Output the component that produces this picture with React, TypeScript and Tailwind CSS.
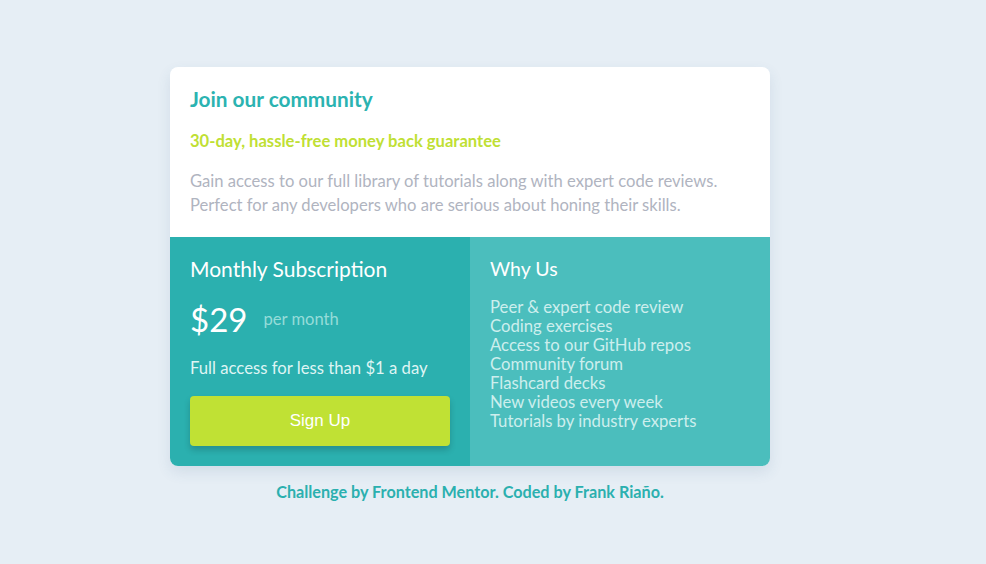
import React from 'react';

const features = [
  'Peer & expert code review',
  'Coding exercises',
  'Access to our GitHub repos',
  'Community forum',
  'Flashcard decks',
  'New videos every week',
  'Tutorials by industry experts',
];

const App: React.FC = () => {
  return (
    <div className="min-h-screen bg-[#e6eef5] flex flex-col items-center pt-[67px] pr-[46px] font-['Lato',sans-serif]">
      {/* Card */}
      <div className="w-[600px] rounded-lg bg-white shadow-[0_6px_14px_rgba(60,100,140,0.12)] overflow-hidden">
        <div className="px-5 pt-[20px] pb-[20px]">
          <h1 className="text-[20.8px] font-bold text-[#2bb3b1] leading-6">Join our community</h1>
          <p className="mt-[18px] text-[16.6px] font-bold text-[#c0df34] leading-6">
            30-day, hassle-free money back guarantee
          </p>
          <p className="mt-[16px] text-[16.6px] text-[#b0b4bf] leading-6">
            Gain access to our full library of tutorials along with expert code reviews.
            <br />
            Perfect for any developers who are serious about honing their skills.
          </p>
        </div>

        <div className="grid grid-cols-2">
          {/* Monthly subscription */}
          <div className="bg-[#2bb0af] px-5 pt-[20px] pb-5">
            <h2 className="text-[21px] text-white leading-6">Monthly Subscription</h2>
            <div className="mt-[18px] flex items-center gap-4">
              <span className="text-[33px] text-white leading-10">$29</span>
              <span className="text-[16.6px] text-[#95dcd9]">per month</span>
            </div>
            <p className="mt-[17px] text-[16.7px] text-[#dff5f4] leading-6">Full access for less than $1 a day</p>
            <button className="mt-[16px] w-full h-[50px] rounded bg-[#c0e134] text-white text-[17px] font-['Liberation_Sans',sans-serif] shadow-[0_4px_6px_rgba(0,0,0,0.18)]">
              Sign Up
            </button>
          </div>

          {/* Why us */}
          <div className="bg-[#4bbebd] px-5 pt-[20px] pb-5">
            <h2 className="text-[19.5px] text-white leading-6">Why Us</h2>
            <ul className="mt-[17px] text-[16.7px] text-[#cdeeed] leading-[19px]">
              {features.map((f) => (
                <li key={f}>{f}</li>
              ))}
            </ul>
          </div>
        </div>
      </div>

      <p className="mt-[14px] text-[16.2px] font-bold text-[#2bb0af]">
        Challenge by Frontend Mentor. Coded by Frank Riaño.
      </p>
    </div>
  );
};

export default App;
